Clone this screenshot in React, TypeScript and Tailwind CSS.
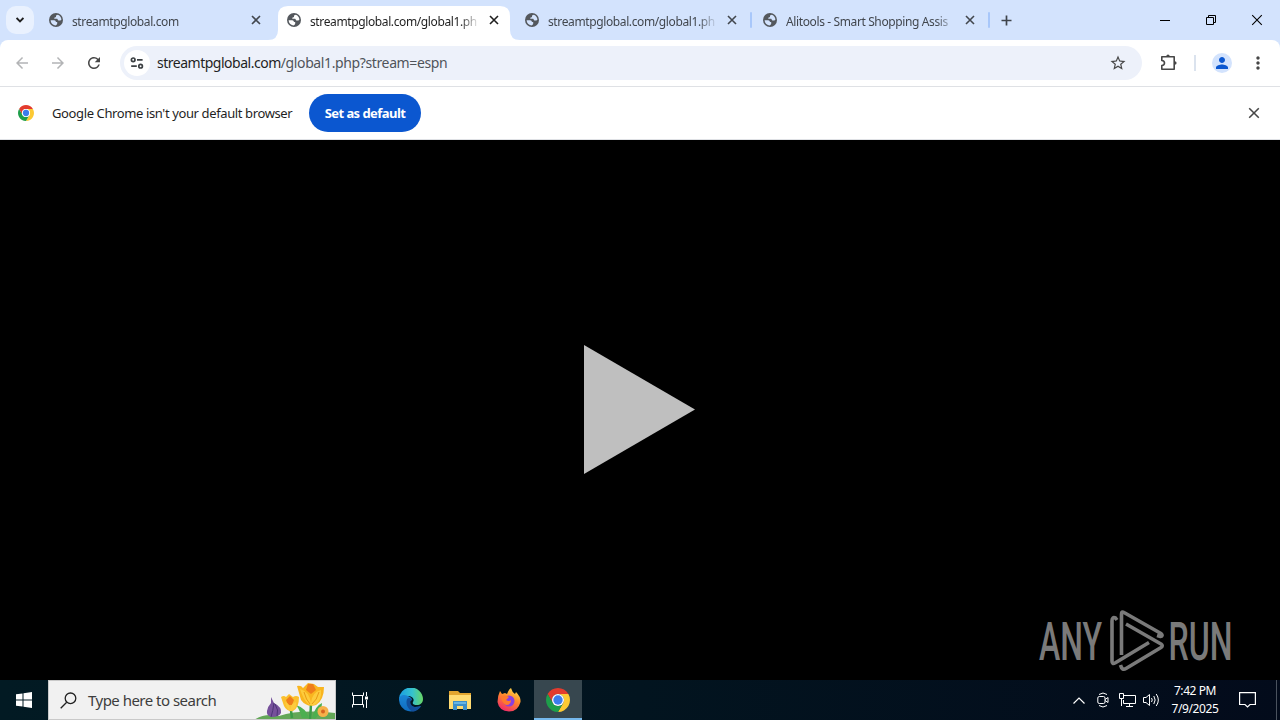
import { ReactNode } from 'react'
import { MdStarBorder, MdPerson, MdMoreVert, MdRefresh, MdArrowBack, MdArrowForward } from 'react-icons/md'

const TABS = [
  { title: 'streamtpglobal.com', active: false, divider: false },
  { title: 'streamtpglobal.com/global1.php', active: true, divider: false },
  { title: 'streamtpglobal.com/global1.php', active: false, divider: true },
  { title: 'Alitools - Smart Shopping Assis', active: false, divider: true },
]

function Cross({ size, width = 1.6 }: { size: number; width?: number }) {
  return (
    <svg width={size} height={size} viewBox="0 0 10 10" fill="none" stroke="currentColor" strokeWidth={width}>
      <path d="M1 1l8 8M9 1l-8 8" />
    </svg>
  )
}

function Globe({ land }: { land: string }) {
  return (
    <svg className="shrink-0" width="14" height="14" viewBox="0 0 14 14">
      <circle cx="7" cy="7" r="7" fill="#54585d" />
      <path fill={land} d="M1.600 7.200H5.200Q6.800 7.500 7 9H8.200V10.800Q7.600 12.200 6.300 12.500Q2 11.500 1.600 7.200Z" />
      <path fill={land} d="M8.800 1.700L7 2.500V4L5.300 4.700V5.800H8.200L9.300 7.600H11.300L12.400 6.800Q12.200 3 8.800 1.700Z" />
    </svg>
  )
}

function ChromeLogo({ size }: { size: number }) {
  return (
    <svg width={size} height={size} viewBox="2 2 44 44">
      <path fill="#e33b2e" d="M24 13H43.05A22 22 0 0 0 4.95 13L14.47 29.5A11 11 0 0 1 24 13Z" />
      <path fill="#fcc934" d="M43.05 13H24A11 11 0 0 1 33.53 29.5L24 46A22 22 0 0 0 43.05 13Z" />
      <path fill="#1e9e4a" d="M4.95 13L14.47 29.5A11 11 0 0 0 33.53 29.5L24 46A22 22 0 0 1 4.95 13Z" />
      <circle cx="24" cy="24" r="11" fill="#fff" />
      <circle cx="24" cy="24" r="8.6" fill="#3b7ded" />
    </svg>
  )
}

function Tab({ title, active, divider }: { title: string; active: boolean; divider: boolean }) {
  return (
    <div className="relative mr-1.5 w-[232px] h-[34px] shrink-0">
      {active && (
        <svg className="absolute -left-2.5 top-0" width="252" height="34" fill="#fff">
          <path d="M0 34Q10 34 10 24V10Q10 0 20 0H232Q242 0 242 10V24Q242 34 252 34Z" />
        </svg>
      )}
      <div className="relative flex h-7 items-center pl-[9px]">
        <Globe land={active ? '#fff' : '#d3e3fd'} />
        <span className={`ml-[9px] w-[168px] whitespace-nowrap pt-[3px] text-[12px] leading-4 tracking-[-0.38px] [mask-image:linear-gradient(to_right,#000_150px,transparent_170px)] ${active ? 'text-[#1f1f1f]' : 'text-[#42474e]'}`}>
          {title}
        </span>
        <span className={`ml-[11px] ${active ? 'text-[#1f1f1f]' : 'text-[#42474e]'}`}><Cross size={10} /></span>
      </div>
      {divider && <div className="absolute -right-1 top-1.5 w-0.5 h-4 rounded bg-[#a8c7fa]" />}
    </div>
  )
}

function TabStrip() {
  return (
    <div className="flex h-10 bg-[#d3e3fd] pt-1.5 pl-1.5">
      <button className="mr-1.5 flex h-7 w-7 items-center justify-center rounded-[10px] bg-[#e9f1fe] text-[#1f1f1f]">
        <svg width="8" height="6" viewBox="0 0 8 6" fill="none" stroke="currentColor" strokeWidth="1.8"><path d="M.6 1L4 4.4L7.4 1" /></svg>
      </button>
      {TABS.map((tab, i) => <Tab key={i} {...tab} />)}
      <div className="flex h-7 w-7 items-center justify-center text-[#3f444b]">
        <svg width="11" height="11" stroke="currentColor" strokeWidth="1.7"><path d="M5.5 .5v10M.5 5.5h10" /></svg>
      </div>
      <div className="ml-auto flex h-7 items-center text-black">
        <div className="flex w-[46px] justify-center"><svg width="10" height="10"><path d="M0 5.5H10" stroke="currentColor" /></svg></div>
        <div className="flex w-[46px] justify-center">
          <svg width="10" height="10" fill="none" stroke="currentColor"><path d="M.5 2.5h7v7h-7zM2.5 2.5V.5h7v7h-2" /></svg>
        </div>
        <div className="flex w-[46px] justify-center"><Cross size={12} width={0.9} /></div>
      </div>
    </div>
  )
}

function Toolbar() {
  return (
    <div className="bg-[#d3e3fd]">
      <div className="flex h-[47px] items-center rounded-t-[8px] border-b border-[#dfe1e5] bg-white">
        <MdArrowBack size={18} className="ml-[13px] text-[#b3b4b6]" />
        <MdArrowForward size={18} className="ml-[18px] text-[#b3b4b6]" />
        <MdRefresh size={18} className="ml-[18px] text-[#474747]" />
        <div className="ml-[17px] flex h-[34px] w-[1022px] items-center rounded-full bg-[#edf1fa] pl-1">
          <div className="flex h-[26px] w-[26px] items-center justify-center rounded-full bg-white">
            <svg width="14" height="12" viewBox="0 0 14 12" fill="none" stroke="#3c4043" strokeWidth="1.7">
              <circle cx="3.2" cy="2.8" r="1.8" />
              <path d="M7 2.8h5.6M1.2 9.2h5.6" />
              <circle cx="10.6" cy="9.2" r="1.8" />
            </svg>
          </div>
          <span className="ml-[7px] whitespace-nowrap text-[14px] leading-5 tracking-[-0.49px] text-[#1f1f1f]">
            streamtpglobal.com<span className="tracking-[-0.38px] text-[#50545a]">/global1.php?stream=espn</span>
          </span>
          <MdStarBorder size={18} className="ml-auto mr-[15px] text-[#474747]" />
        </div>
        <svg className="ml-[18px] mb-0.5" width="18" height="17" fill="none" stroke="#474747" strokeWidth="1.600" strokeLinejoin="round">
          <path d="M1.800 2.800H14.200V15.200H1.800V11.500Q4.500 11.200 4.500 9Q4.500 6.800 1.800 6.500Z" />
          <path d="M6.200 2.200Q6.500 .4 8 .4Q9.500 .4 9.800 2.200ZM14.800 7.200Q16.600 7.500 16.600 9Q16.600 10.500 14.800 10.800Z" fill="#474747" stroke="none" />
        </svg>
        <div className="ml-4 h-4 w-0.5 bg-[#dbe3ee]" />
        <div className="ml-4 flex h-5 w-5 items-center justify-center rounded-full bg-[#d3e3fd]">
          <MdPerson size={18} className="text-[#0b57d0]" />
        </div>
        <MdMoreVert size={20} className="ml-4 text-[#474747]" />
      </div>
    </div>
  )
}

function InfoBar() {
  return (
    <div className="flex h-[53px] items-center border-b border-[#dfe1e5] bg-white pl-[18px]">
      <ChromeLogo size={16} />
      <span className="ml-[18px] w-[241px] whitespace-nowrap pt-0.5 text-[13px] tracking-[-0.38px] text-[#1f1f1f]">Google Chrome isn't your default browser</span>
      <button className="ml-4 h-[38px] w-[112px] shrink-0 rounded-full bg-[#0b57d0] pt-px text-[13px] font-bold tracking-[-0.55px] text-white">Set as default</button>
      <span className="ml-auto mr-5 text-[#474747]"><Cross size={12} width={1.3} /></span>
    </div>
  )
}

function Watermark() {
  return (
    <svg width="198" height="64" viewBox="1038 609 198 64" fill="#7a7a7a" fontFamily="Roboto, sans-serif" fontWeight="500" fontSize="53">
      <text x="1039" y="660" textLength="63" lengthAdjust="spacingAndGlyphs">ANY</text>
      <text x="1168.500" y="660" textLength="64" lengthAdjust="spacingAndGlyphs">RUN</text>
      <g fill="none" stroke="#7a7a7a" strokeWidth="3.6" strokeLinejoin="round">
        <path d="M1117 620L1115.500 618Q1112 616.500 1112 621V661Q1112 664.500 1115 663L1149 642.500" />
        <path d="M1121.500 655V614Q1121.500 611 1124 612.500L1161 633.500Q1163.500 636 1160.500 636.500L1157 635.500" />
        <path d="M1126 624L1161 644Q1163.500 645.800 1161 647.500L1126 668.500Q1122 671 1120.500 665" />
      </g>
    </svg>
  )
}

function Flowers() {
  return (
    <svg width="80" height="38" viewBox="255 681 80 38">
      <path d="M254 720Q264 713 279 716Q300 709 336 713V720Z" fill="#63a757" />
      <path d="M292 718Q291 710 290 704M310 719Q311 708 311 700" stroke="#3c9c48" strokeWidth="2.5" fill="none" />
      <path d="M302 718Q299 708 296 705Q306 708 309 718ZM312 718Q315 706 322 703Q322 712 315 719Z" fill="#4caf50" />
      <path d="M271 697L274 703Q282 707 281 713Q279 717 272 717Q266 716 267 711Q268 706 271 703Z" fill="#76519b" />
      <path d="M274 703Q273 711 271 717M275 704Q279 710 277 716" stroke="#4c3476" fill="none" />
      <path d="M281 697Q284 695 286 697L289 694L293 697Q296 695 299 697Q299 708 293 711Q287 712 284 706Z" fill="#fbc02d" />
      <path d="M286 700L290 696L294 700L292 705H288Z" fill="#ef7d1a" />
      <path d="M285 702Q290 703 290 710Q291 703 296 702Q297 708 292 711Q287 711 285 702Z" fill="#fdcb3e" />
      <path d="M297 686Q301 685 303 688L308 683L314 684L318 687L324 687Q324 700 316 705Q307 708 301 700Z" fill="#f9b51f" />
      <path d="M306 690L308 684H313L316 690L311 694Z" fill="#ef7d1a" />
      <path d="M300 689Q309 691 311 703Q312 692 321 690Q322 700 315 705Q306 708 300 689Z" fill="#fdcc3c" />
      <path d="M304 692Q306 700 310 704M319 692Q317 700 312 704" stroke="#e99a16" fill="none" />
      <circle cx="323" cy="711.500" r="5.500" fill="#f6b04a" />
      <circle cx="323" cy="711.500" r="2" fill="#d76420" />
    </svg>
  )
}

function EdgeLogo() {
  return (
    <svg width="24" height="24" viewBox="0 0 24 24">
      <defs>
        <linearGradient id="edgeTop" x1="0" x2="1"><stop stopColor="#199de2" /><stop offset=".55" stopColor="#35c1cf" /><stop offset="1" stopColor="#68d765" /></linearGradient>
        <linearGradient id="edgeLow" x1="0" y1="0" x2="0" y2="1"><stop stopColor="#1b86d6" /><stop offset="1" stopColor="#0f6cc0" /></linearGradient>
      </defs>
      <path d="M0 12A12 12 0 0 1 24 11C24 15 21 17 18 17C15 17 13 16 14 14C16 11 13 8 9 8C4 8 0 10 0 12Z" fill="url(#edgeTop)" />
      <path d="M0 12C0 7 5 6 9 8C12 9 13 11 13 12C9 13 10 19 16 19C19 19 21 18 22 18A12 12 0 0 1 0 12Z" fill="url(#edgeLow)" />
      <path d="M8 11C6 17 10 22 14 23.800A12 12 0 0 0 22.200 18C18 20 14 19.500 12 16.500C11 14 11 13 13 11.500Q10 9 8 11Z" fill="#124f9b" />
    </svg>
  )
}

function ExplorerLogo() {
  return (
    <svg width="22" height="19" viewBox="0 0 22 19">
      <path d="M0 0H9L11 2H22V18H0Z" fill="#e2a52f" />
      <path d="M0 4H22V18H0Z" fill="#ffdb72" />
      <path d="M4 10H18V19H14V15H8V19H4Z" fill="#3d8fca" />
      <path d="M5 12H17" stroke="#68b5e5" strokeWidth="2" />
    </svg>
  )
}

function FirefoxLogo() {
  return (
    <svg width="24" height="24" viewBox="0 0 24 24">
      <defs>
        <linearGradient id="fox" x1=".8" y1="0" x2=".3" y2="1"><stop stopColor="#ffe14d" /><stop offset=".45" stopColor="#ff8a2b" /><stop offset="1" stopColor="#f0286a" /></linearGradient>
      </defs>
      <path d="M3 3L5 6L8 5L10 6Q12 1 14 0Q15 4 18 6L19 4Q24 9 23.500 14Q21 23.500 12 23.500Q2 23 .5 14Q.5 8 3 3Z" fill="url(#fox)" />
      <circle cx="12" cy="13" r="5.500" fill="#8a3fe0" />
      <path d="M4 9Q8 6 12 9L9 12Q12 14 14 12Q14 17 9 17Q5 15 4 9Z" fill="#ff7a2c" />
    </svg>
  )
}

function TaskItem({ children, active = false }: { children: ReactNode; active?: boolean }) {
  return (
    <div className={`mr-px flex h-10 w-12 items-center justify-center ${active ? 'border-b-2 border-[#76b9ed] bg-[#37474f] pt-0.5' : ''}`}>
      {children}
    </div>
  )
}

function Taskbar() {
  return (
    <div className="flex h-10 items-center bg-linear-to-r from-[#021a23] via-[#02141f] to-[#030b1b] text-white">
      <div className="flex w-12 justify-center">
        <svg width="16" height="16" viewBox="0 0 16 16" fill="#fff"><path d="M0 2.300L6.500 1.400V7.500H0ZM7.500 1.200L16 0V7.500H7.500ZM0 8.500H6.500V14.600L0 13.700ZM7.500 8.500H16V16L7.500 14.800Z" /></svg>
      </div>
      <div className="flex h-10 w-72 items-center border border-[#c9c9c9] bg-[#f1f1f1] pl-[11px]">
        <svg width="17" height="17" fill="none" stroke="#222" strokeWidth="1.3"><circle cx="10.500" cy="6.300" r="5.300" /><path d="M6.700 10.200L.7 16.200" /></svg>
        <span className="ml-[11px] whitespace-nowrap text-[15px] tracking-[-0.52px] text-[#3d3d3d]">Type here to search</span>
        <span className="ml-auto"><Flowers /></span>
      </div>
      <TaskItem>
        <svg width="16" height="16" fill="none" stroke="#fff"><path d="M.5 .5V3.500H11.500V.5M1.500 4V12M10.500 4V12M.5 15.500V12.500H11.500V15.500M14.500 0V4M14.500 8V16" /><path d="M13 4.500h3v3h-3z" fill="#fff" stroke="none" /></svg>
      </TaskItem>
      <div className="ml-0.5 flex">
        <TaskItem><EdgeLogo /></TaskItem>
        <TaskItem><ExplorerLogo /></TaskItem>
        <TaskItem><FirefoxLogo /></TaskItem>
        <TaskItem active><ChromeLogo size={24} /></TaskItem>
      </div>
      <div className="ml-auto flex h-10 items-center">
        <svg width="12" height="7" fill="none" stroke="#fff" strokeWidth="1.200"><path d="M.5 6.500L6 1L11.500 6.500" /></svg>
        <svg className="ml-3" width="12" height="16" fill="none" stroke="#fff"><path d="M2 2.500Q6 -.5 10 2.500M2 13.500Q6 16.500 10 13.500M.8 6Q.8 4.500 2.300 4.500H6.500Q8 4.500 8 6V10Q8 11.500 6.500 11.500H2.300Q.8 11.500 .8 10ZM8 7.500L11 5.500V10.500L8 8.500" /></svg>
        <svg className="ml-2.5" width="17" height="14" fill="none" stroke="#fff"><path d="M5 2.500H16.500V10.500H4.500V7M10.500 10.500V13.500M7 13.500H14M.5 .5H4.500V5.500H.5ZM2.500 5.500V13" /></svg>
        <svg className="ml-[7px]" width="17" height="14" fill="none" stroke="#fff"><path d="M.5 4.500H3L6.500 1.500V12.500L3 9.500H.5ZM8.500 5Q10 7 8.500 9M10.800 3Q13.500 7 10.800 11M13.200 1Q17.500 7 13.200 13" /></svg>
        <div className="ml-[9px] w-[52px] whitespace-nowrap text-center text-[12px] leading-[18px] tracking-[-0.42px]">
          <div>7:42 PM</div>
          <div>7/9/2025</div>
        </div>
        <svg className="ml-[18px]" width="17" height="16" fill="none" stroke="#fff" strokeWidth="1.200"><path d="M.6 .6H16.400V12.500H11L8.500 15L6 12.500H.6Z" /></svg>
        <div className="ml-5 mr-[3px] h-10 w-px bg-[#4a525e]" />
      </div>
    </div>
  )
}

export default function App() {
  return (
    <div className="flex h-[720px] w-[1280px] flex-col overflow-hidden bg-black font-['Noto_Sans','Open_Sans',sans-serif]">
      <TabStrip />
      <Toolbar />
      <InfoBar />
      <main className="relative flex h-[540px] items-center justify-center bg-black">
        <svg width="112" height="130" fill="#bfbfbf"><path d="M0 0L111 64.500L0 129Z" /></svg>
        <div className="absolute bottom-[7px] right-11"><Watermark /></div>
      </main>
      <Taskbar />
    </div>
  )
}
